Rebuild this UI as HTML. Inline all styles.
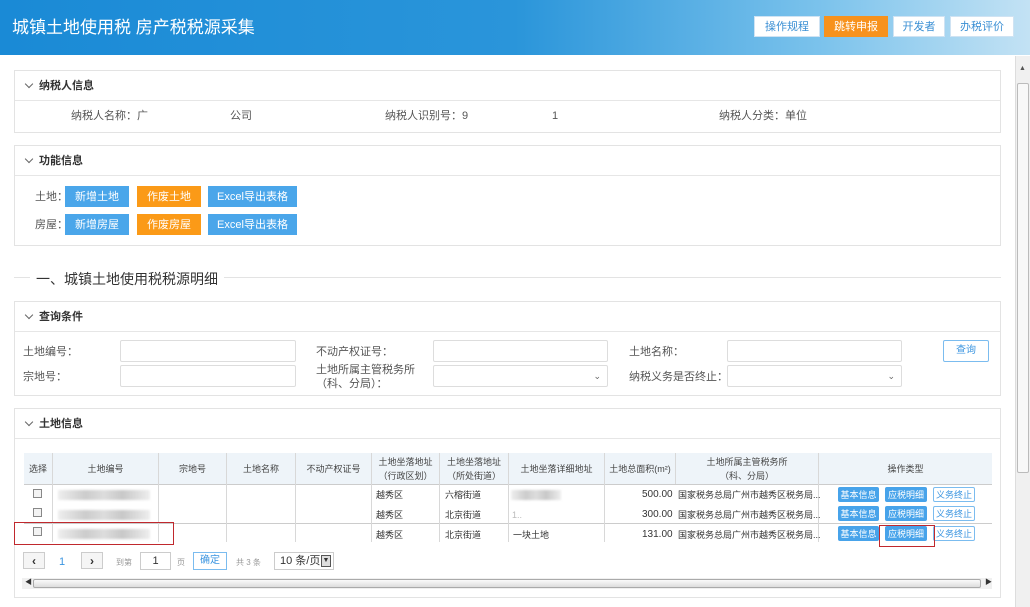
<!DOCTYPE html>
<html><head><meta charset="utf-8"><style>
*{box-sizing:border-box;margin:0;padding:0}
body{width:1030px;height:607px;overflow:hidden;background:#fff;font-family:"Liberation Sans","Noto Sans CJK SC",sans-serif;color:#333;font-size:11px;position:relative;line-height:14px}
.a{position:absolute}
.hdr{left:0;top:0;width:1030px;height:55px;background:linear-gradient(90deg,#1a8ad6 0%,#2a95da 50%,#7cc3ec 80%,#c3e2f4 100%)}
.title{left:12px;top:17px;font-size:17px;line-height:22px;color:#fff}
.tb{top:16px;height:21px;font-size:11px;display:flex;align-items:center;justify-content:center;border:1px solid #cfe3f3;background:#fff;color:#3a8fd4}
.panel{border:1px solid #e3e3e3;background:#fff}
.ph{height:30px;border-bottom:1px solid #e6e6e6;font-size:11px;font-weight:bold;line-height:30px;padding-left:24px;color:#333;position:relative}
.ph:before{content:"";position:absolute;left:11px;top:10px;width:5px;height:5px;border-right:1px solid #666;border-bottom:1px solid #666;transform:rotate(45deg)}
.btn{height:21px;display:flex;align-items:center;justify-content:center;color:#fff;font-size:11px}
.bl{background:#4aa6ea}.or{background:#fb9a17}
.inp{border:1px solid #ddd;border-radius:2px;height:22px;background:#fff}
.lab{font-size:11px;color:#555;line-height:14px}
.blur{background:linear-gradient(90deg,#eee,#ccc 30%,#ddd 50%,#c8c8c8 70%,#eee);filter:blur(1px);height:10px}
.th{top:453px;height:31px;background:#eef4f9;border-right:1px solid #d8d8d8;font-size:9px;color:#444;text-align:center;line-height:14px;display:flex;align-items:center;justify-content:center}
.cell{font-size:9px;color:#333;position:absolute;line-height:12px}
.sb{height:15px;display:flex;align-items:center;justify-content:center;font-size:9px;color:#fff;background:#47a3ea;border-radius:2px}
.sw{height:15px;display:flex;align-items:center;justify-content:center;font-size:9px;color:#3b95e0;border:1px solid #7bbcef;background:#fff;border-radius:2px}
.vl{width:1px;background:#d8d8d8}
.cb{width:9px;height:9px;border:1px solid #888;background:#f3f3f3}
</style></head><body>
<div class="a hdr"></div>
<div class="a title">城镇土地使用税 房产税税源采集</div>
<div class="a tb" style="left:754px;width:66px">操作规程</div>
<div class="a tb" style="left:824px;width:64px;background:#f7921d;color:#fff;border-color:#f7921d">跳转申报</div>
<div class="a tb" style="left:893px;width:52px">开发者</div>
<div class="a tb" style="left:950px;width:64px">办税评价</div>

<div class="a" style="left:1015px;top:56px;width:15px;height:551px;background:#f0f0f0;border-left:1px solid #ddd"></div>
<div class="a" style="left:1017px;top:83px;width:12px;height:390px;background:#f8f8f8;border:1px solid #bbb;border-radius:2px"></div>
<div class="a" style="left:1019px;top:62px;font-size:7px;color:#555">▲</div>

<div class="a panel" style="left:14px;top:70px;width:987px;height:63px">
<div class="ph">纳税人信息</div>
<div class="a lab" style="left:56px;top:38px">纳税人名称：广</div>
<div class="a lab" style="left:215px;top:38px">公司</div>
<div class="a lab" style="left:370px;top:38px">纳税人识别号：9</div>
<div class="a lab" style="left:537px;top:38px">1</div>
<div class="a lab" style="left:704px;top:38px">纳税人分类：单位</div>
</div>

<div class="a panel" style="left:14px;top:145px;width:987px;height:101px">
<div class="ph">功能信息</div>
<div class="a lab" style="left:20px;top:44px">土地：</div>
<div class="a lab" style="left:20px;top:72px">房屋：</div>
<div class="a btn bl" style="left:50px;top:40px;width:64px">新增土地</div>
<div class="a btn or" style="left:122px;top:40px;width:64px">作废土地</div>
<div class="a btn bl" style="left:193px;top:40px;width:89px">Excel导出表格</div>
<div class="a btn bl" style="left:50px;top:68px;width:64px">新增房屋</div>
<div class="a btn or" style="left:122px;top:68px;width:64px">作废房屋</div>
<div class="a btn bl" style="left:193px;top:68px;width:89px">Excel导出表格</div>
</div>

<div class="a" style="left:14px;top:277px;width:987px;height:1px;background:#e3e3e3"></div>
<div class="a" style="left:30px;top:270px;background:#fff;padding:0 6px;font-size:14px;line-height:18px;color:#333">一、城镇土地使用税税源明细</div>

<div class="a panel" style="left:14px;top:301px;width:987px;height:95px">
<div class="ph">查询条件</div>
<div class="a lab" style="left:8px;top:43px">土地编号：</div>
<div class="a lab" style="left:8px;top:68px">宗地号：</div>
<div class="a inp" style="left:105px;top:38px;width:176px"></div>
<div class="a inp" style="left:105px;top:63px;width:176px"></div>
<div class="a lab" style="left:301px;top:43px">不动产权证号：</div>
<div class="a lab" style="left:301px;top:61px">土地所属主管税务所<br>（科、分局）：</div>
<div class="a inp" style="left:418px;top:38px;width:175px"></div>
<div class="a inp" style="left:418px;top:63px;width:175px"><span class="a" style="right:6px;top:3px;font-size:9px;color:#666">⌄</span></div>
<div class="a lab" style="left:614px;top:43px">土地名称：</div>
<div class="a lab" style="left:614px;top:68px">纳税义务是否终止：</div>
<div class="a inp" style="left:712px;top:38px;width:175px"></div>
<div class="a inp" style="left:712px;top:63px;width:175px"><span class="a" style="right:6px;top:3px;font-size:9px;color:#666">⌄</span></div>
<div class="a" style="left:928px;top:38px;width:46px;height:22px;border:1px solid #7bbcef;border-radius:2px;color:#3b95e0;display:flex;align-items:center;justify-content:center;font-size:10px">查询</div>
</div>

<div class="a panel" style="left:14px;top:408px;width:987px;height:190px">
<div class="ph">土地信息</div>
</div>
<div class="a th" style="left:24px;width:29px">选择</div>
<div class="a th" style="left:53px;width:106px">土地编号</div>
<div class="a th" style="left:159px;width:68px">宗地号</div>
<div class="a th" style="left:227px;width:69px">土地名称</div>
<div class="a th" style="left:296px;width:76px">不动产权证号</div>
<div class="a th" style="left:372px;width:68px">土地坐落地址<br>（行政区划）</div>
<div class="a th" style="left:440px;width:69px">土地坐落地址<br>（所处街道）</div>
<div class="a th" style="left:509px;width:96px">土地坐落详细地址</div>
<div class="a th" style="left:605px;width:71px">土地总面积(m²)</div>
<div class="a th" style="left:676px;width:143px">土地所属主管税务所<br>（科、分局）</div>
<div class="a th" style="left:819px;width:173px;border-right:none">操作类型</div>
<div class="a" style="left:24px;top:484px;width:968px;height:1px;background:#ccc"></div>
<div class="a" style="left:24px;top:523px;width:968px;height:1px;background:#ccc"></div>
<div class="a vl" style="left:52px;top:484px;height:58px"></div>
<div class="a vl" style="left:158px;top:484px;height:58px"></div>
<div class="a vl" style="left:226px;top:484px;height:58px"></div>
<div class="a vl" style="left:295px;top:484px;height:58px"></div>
<div class="a vl" style="left:371px;top:484px;height:58px"></div>
<div class="a vl" style="left:439px;top:484px;height:58px"></div>
<div class="a vl" style="left:508px;top:484px;height:58px"></div>
<div class="a vl" style="left:604px;top:484px;height:58px"></div>
<div class="a vl" style="left:818px;top:484px;height:58px"></div>
<div class="a cb" style="left:33px;top:489px"></div>
<div class="a cb" style="left:33px;top:508px"></div>
<div class="a cb" style="left:33px;top:527px"></div>
<div class="a blur" style="left:58px;top:490px;width:92px"></div>
<div class="a blur" style="left:58px;top:510px;width:92px"></div>
<div class="a blur" style="left:58px;top:529px;width:92px"></div>
<div class="a" style="left:14px;top:522px;width:160px;height:23px;border:1px solid #c0282d"></div>
<div class="cell" style="left:376px;top:489px">越秀区</div>
<div class="cell" style="left:376px;top:509px">越秀区</div>
<div class="cell" style="left:376px;top:529px">越秀区</div>
<div class="cell" style="left:445px;top:489px">六榕街道</div>
<div class="cell" style="left:445px;top:509px">北京街道</div>
<div class="cell" style="left:445px;top:529px">北京街道</div>
<div class="a blur" style="left:511px;top:490px;width:50px"></div>
<div class="cell" style="left:512px;top:509px;color:#bbb">1..</div>
<div class="cell" style="left:513px;top:529px">一块土地</div>
<div class="cell" style="left:642px;top:489px;font-size:10px">500.00</div>
<div class="cell" style="left:642px;top:509px;font-size:10px">300.00</div>
<div class="cell" style="left:642px;top:529px;font-size:10px">131.00</div>
<div class="cell" style="left:678px;top:489px">国家税务总局广州市越秀区税务局...</div>
<div class="cell" style="left:678px;top:509px">国家税务总局广州市越秀区税务局...</div>
<div class="cell" style="left:678px;top:529px">国家税务总局广州市越秀区税务局...</div>
<div class="a sb" style="left:838px;top:487px;width:41px">基本信息</div>
<div class="a sb" style="left:885px;top:487px;width:42px">应税明细</div>
<div class="a sw" style="left:933px;top:487px;width:42px">义务终止</div>
<div class="a sb" style="left:838px;top:506px;width:41px">基本信息</div>
<div class="a sb" style="left:885px;top:506px;width:42px">应税明细</div>
<div class="a sw" style="left:933px;top:506px;width:42px">义务终止</div>
<div class="a sb" style="left:838px;top:526px;width:41px">基本信息</div>
<div class="a sb" style="left:885px;top:526px;width:42px">应税明细</div>
<div class="a sw" style="left:933px;top:526px;width:42px">义务终止</div>
<div class="a" style="left:879px;top:525px;width:56px;height:22px;border:1px solid #c0282d"></div>
<div class="a" style="left:23px;top:552px;width:22px;height:17px;border:1px solid #ccc;background:#f5f5f5;display:flex;align-items:center;justify-content:center;font-size:12px;font-weight:bold">‹</div>
<div class="a" style="left:59px;top:555px;color:#3b95e0;font-size:11px">1</div>
<div class="a" style="left:81px;top:552px;width:22px;height:17px;border:1px solid #ccc;background:#f5f5f5;display:flex;align-items:center;justify-content:center;font-size:12px;font-weight:bold">›</div>
<div class="a" style="left:116px;top:556px;font-size:8px;color:#999">到第</div>
<div class="a" style="left:140px;top:552px;width:31px;height:18px;border:1px solid #ccc;display:flex;align-items:center;justify-content:center;font-size:11px">1</div>
<div class="a" style="left:177px;top:556px;font-size:8px;color:#999">页</div>
<div class="a" style="left:193px;top:552px;width:34px;height:18px;border:1px solid #7bbcef;color:#3b95e0;display:flex;align-items:center;justify-content:center;font-size:10px">确定</div>
<div class="a" style="left:236px;top:556px;font-size:8px;color:#999">共 3 条</div>
<div class="a" style="left:274px;top:552px;width:60px;height:18px;border:1px solid #ccc;font-size:11px;display:flex;align-items:center;padding-left:5px">10 条/页</div>
<div class="a" style="left:321px;top:555px;width:10px;height:12px;border:1px solid #555;background:#ddd;font-size:7px;text-align:center;line-height:10px">▼</div>
<div class="a" style="left:22px;top:578px;width:970px;height:11px;background:#f0f0f0"></div>
<div class="a" style="left:33px;top:579px;width:948px;height:9px;border:1px solid #aaa;border-radius:2px;background:linear-gradient(#fafafa,#ddd)"></div>
<div class="a" style="left:25px;top:578px;font-size:7px;line-height:10px">◀</div>
<div class="a" style="left:985px;top:578px;font-size:7px;line-height:10px">▶</div>
</body></html>
